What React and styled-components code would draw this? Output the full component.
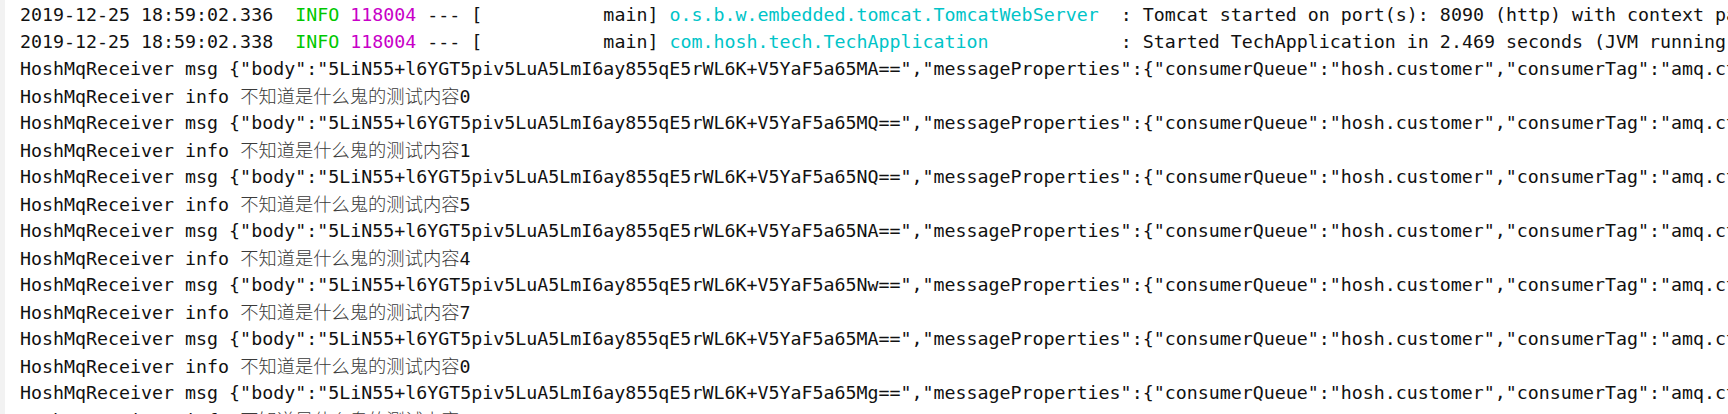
import styled, { createGlobalStyle } from 'styled-components';

const GlobalStyle = createGlobalStyle`
	html, body {
		margin: 0;
		padding: 0;
		background: #ffffff;
	}
`;

const Console = styled.div`
	display: flex;
	width: 1728px;
	height: 414px;
	overflow: hidden;
	background: #ffffff;
`;

const Gutter = styled.div`
	flex: 0 0 5px;
	background: #f2f2f2;
`;

const Output = styled.div`
	flex: 1;
	padding: 1px 0 0 15px;
	overflow: hidden;
	font-family: "DejaVu Sans Mono", "Liberation Mono", "Noto Sans CJK SC", monospace;
	font-size: 18.3px;
	line-height: 27px;
	color: #111111;
`;

const Line = styled.div`
	white-space: pre;
	height: 27px;
`;

const Token = styled.span`
	color: ${(p) => p.$color || 'inherit'};
`;

const Cjk = styled.span`
	font-family: "Noto Sans CJK SC", sans-serif;
	font-weight: 300;
	color: #3a3a3a;
`;

const COLORS = {
	info: '#00c800',
	pid: '#c800c8',
	logger: '#00c4c8'
};

const startup = [
	{
		time: '2019-12-25 18:59:02.336',
		logger: 'o.s.b.w.embedded.tomcat.TomcatWebServer ',
		text: "Tomcat started on port(s): 8090 (http) with context path ''"
	},
	{
		time: '2019-12-25 18:59:02.338',
		logger: 'com.hosh.tech.TechApplication           ',
		text: 'Started TechApplication in 2.469 seconds (JVM running for 3.214)'
	}
];

const messages = [
	{ tail: 'MA==', n: '0' },
	{ tail: 'MQ==', n: '1' },
	{ tail: 'NQ==', n: '5' },
	{ tail: 'NA==', n: '4' },
	{ tail: 'Nw==', n: '7' },
	{ tail: 'MA==', n: '0' },
	{ tail: 'Mg==', n: '2' }
];

function StartupLine({ row }) {
	return (
		<Line>
			{row.time}  <Token $color={COLORS.info}>INFO</Token> <Token $color={COLORS.pid}>118004</Token> --- [           main] <Token $color={COLORS.logger}>{row.logger}</Token> : {row.text}
		</Line>
	);
}

export default function App() {
	return (
		<>
			<GlobalStyle />
			<Console>
				<Gutter />
				<Output>
					{startup.map((row, i) => (
						<StartupLine key={'s' + i} row={row} />
					))}
					{messages.map((m, i) => (
						<div key={'m' + i}>
							<Line>
								{'HoshMqReceiver msg {"body":"5LiN55+l6YGT5piv5LuA5LmI6ay855qE5rWL6K+V5YaF5a65' + m.tail + '","messageProperties":{"consumerQueue":"hosh.customer","consumerTag":"amq.ctag-3kXn9vQ2bT1pZr"}}'}
							</Line>
							<Line>
								HoshMqReceiver info <Cjk>不知道是什么鬼的测试内容</Cjk>{m.n}
							</Line>
						</div>
					))}
				</Output>
			</Console>
		</>
	);
}
